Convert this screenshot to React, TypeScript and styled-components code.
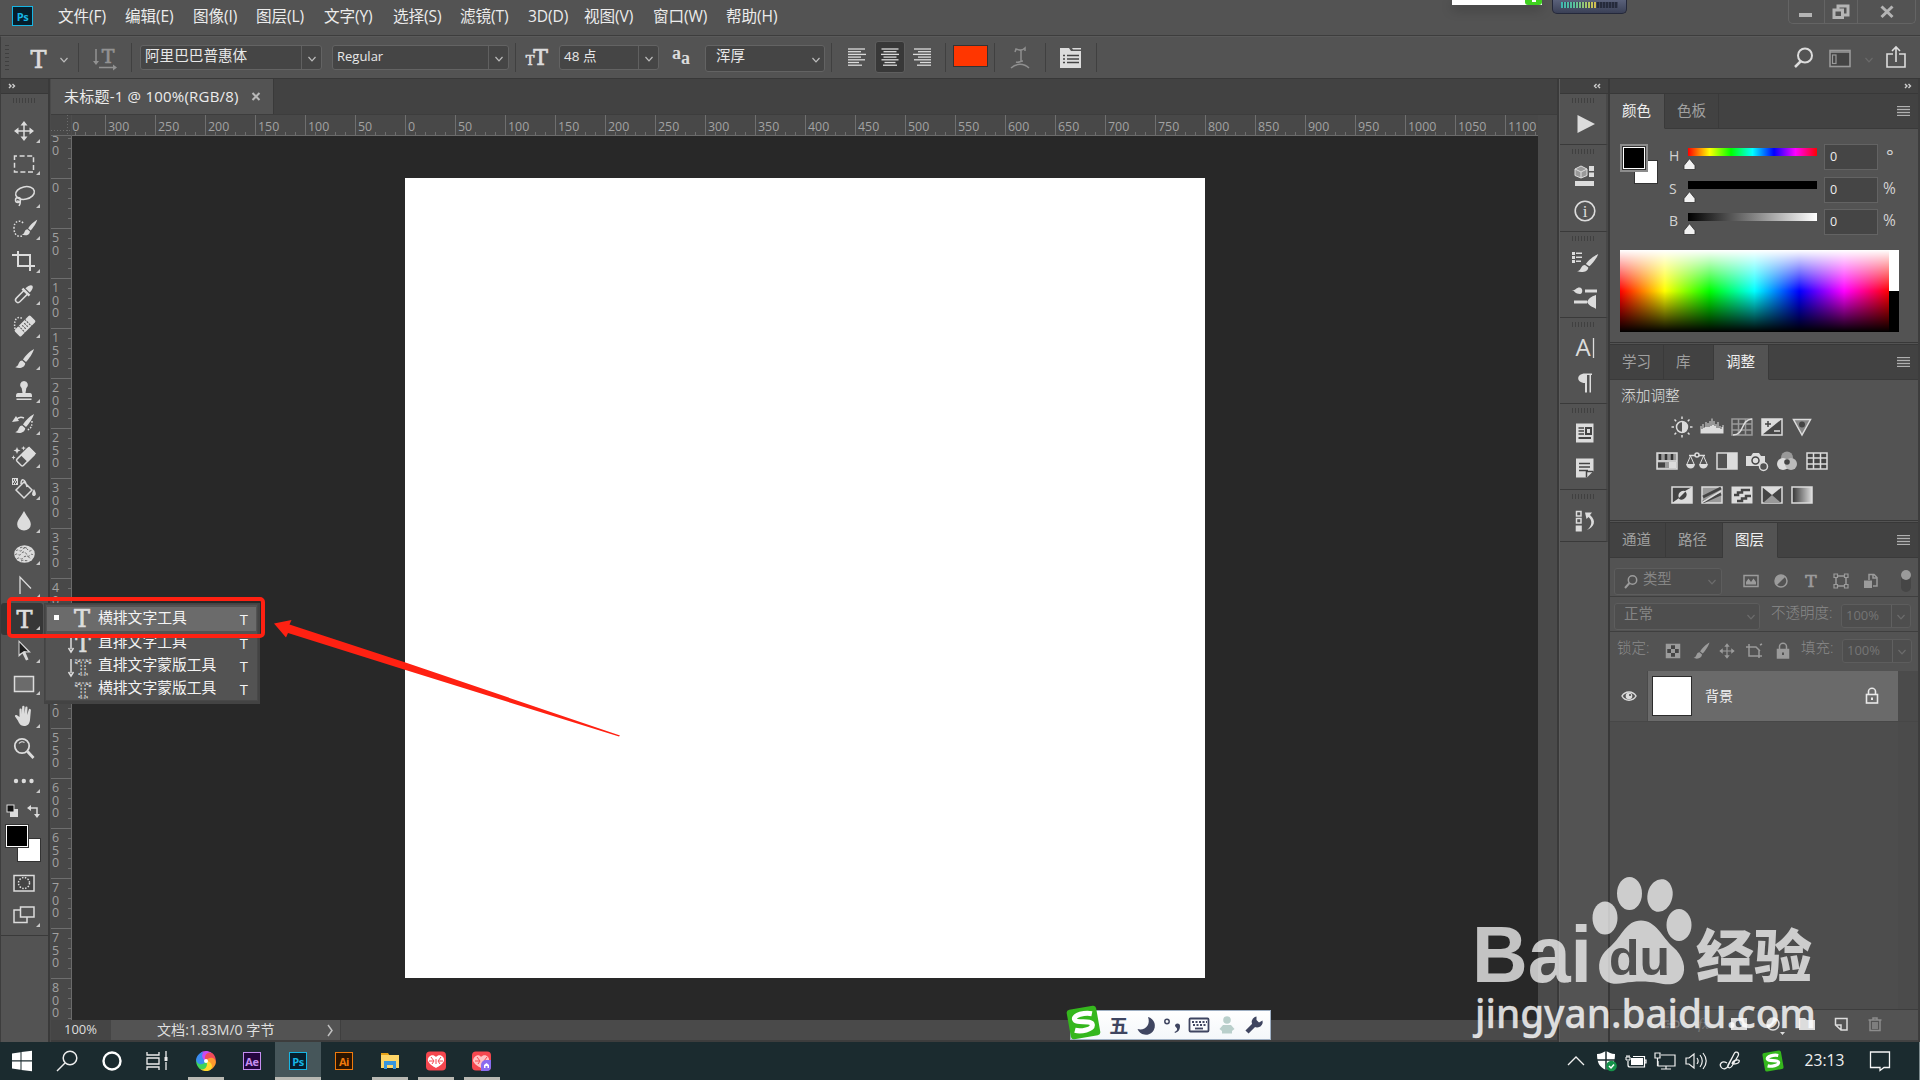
import React from "react";
import styled, { createGlobalStyle, css } from "styled-components";

const UI = `"Open Sans", "Noto Sans CJK SC", sans-serif`;
const LIGHT = "#dcdcdc";

const Global = createGlobalStyle`
  *, *::before, *::after { box-sizing: border-box; }
  body { margin: 0; background: #282828; overflow: hidden; }
  svg { display: block; flex: none; overflow: visible; }
`;

const Screen = styled.div`
  position: relative;
  width: 1920px;
  height: 1080px;
  display: flex;
  flex-direction: column;
  overflow: hidden;
  background: #535353;
  color: #e6e6e6;
  font: 14px/1 ${UI};
  white-space: nowrap;
`;

/* ---------- menu bar ---------- */
const MenuBar = styled.header`
  display: flex;
  height: 36px;
  flex: none;
  border-bottom: 1px solid #3d3d3d;
`;
const AppBadge = styled.div<{ $c: string; $bg: string; $w?: number }>`
  display: flex;
  align-items: center;
  justify-content: center;
  flex: none;
  width: ${(p) => p.$w ?? 18}px;
  height: ${(p) => (p.$w ?? 19) - 1}px;
  border: 1.5px solid ${(p) => p.$c};
  background: ${(p) => p.$bg};
  color: ${(p) => p.$c};
  font: 700 11px/1 "Open Sans", sans-serif;
  letter-spacing: -0.4px;
`;
const BadgeSlot = styled.div`
  padding: 6px 0 0 12px;
  width: 58px;
`;
const MenuItem = styled.span<{ $w: number }>`
  width: ${(p) => p.$w}px;
  padding-top: 9px;
  font-size: 15.6px;
  letter-spacing: -0.1px;
  color: #ececec;
`;
const WindowButtons = styled.div`
  display: flex;
  margin-left: auto;
  margin-right: 4px;
  width: 128px;
  height: 24px;
  border: 1px solid #646464;
  border-top: 0;
  border-radius: 0 0 5px 5px;
`;
const WinBtn = styled.div<{ $w: number }>`
  width: ${(p) => p.$w}px;
  display: flex;
  justify-content: center;
  padding-top: 3px;
  & + & { border-left: 1px solid #646464; }
`;
const PeekCard = styled.div`
  position: absolute;
  left: 1452px;
  top: 0;
  width: 90px;
  height: 5px;
  display: flex;
  justify-content: flex-end;
  background: #fff;
  box-shadow: 0 4px 12px rgba(0, 0, 0, 0.3);
`;
const PeekDot = styled.div`
  width: 17px;
  height: 5px;
  background: #3fd01f;
  border-radius: 0 0 3px 3px;
  display: flex;
  justify-content: center;
  &::after { content: ""; width: 4px; height: 2px; background: #fff; }
`;
const Meter = styled.div`
  position: absolute;
  left: 1552px;
  top: 0;
  width: 75px;
  height: 14px;
  border: 1px solid #24283a;
  border-top: 0;
  border-radius: 0 0 5px 5px;
  background: linear-gradient(#5a617a, #3a4056);
  padding: 2px 8px 0;
`;
const MeterBars = styled.div`
  height: 6px;
  background:
    repeating-linear-gradient(to right, transparent 0 2px, #3b4157 2px 3px),
    linear-gradient(to right, #3fb5b0, #5cc09a 25%, #b9c860 50%, #d8b84a 64%, #262b3c 64%);
`;

/* ---------- options bar ---------- */
const OptionsBar = styled.div`
  display: flex;
  height: 43px;
  flex: none;
  align-items: flex-start;
  border-left: 1px solid #3d3d3d;
  border-top: 1px solid #5a5a5a;
  border-bottom: 1px solid #383838;
`;
const Slot = styled.div<{ $w: number; $t?: number }>`
  width: ${(p) => p.$w}px;
  flex: none;
  padding-top: ${(p) => p.$t ?? 0}px;
  display: flex;
  justify-content: center;
`;
const Grip = styled.div`
  width: 4px;
  height: 25px;
  flex: none;
  margin: 8px 0 0 4px;
  background: repeating-linear-gradient(#3f3f3f 0 1.5px, transparent 1.5px 4px);
`;
const Sep = styled.div`
  width: 1px;
  height: 29px;
  margin-top: 6px;
  background: #404040;
  flex: none;
`;
const Combo = styled.div<{ $w: number; $h?: number; $l?: number; $r?: number; $dim?: boolean; $pl?: number; $fs?: number }>`
  display: flex;
  align-items: stretch;
  flex: none;
  width: ${(p) => p.$w}px;
  height: ${(p) => p.$h ?? 25}px;
  margin: ${(p) => (p.$dim ? 0 : 8)}px ${(p) => p.$r ?? 0}px 0 ${(p) => p.$l ?? 0}px;
  border: 1px solid ${(p) => (p.$dim ? "#5d5d5d" : "#636363")};
  border-radius: 3px;
  background: ${(p) => (p.$dim ? "#4e4e4e" : "#454545")};
  color: ${(p) => (p.$dim ? "#858585" : "#e8e8e8")};
  font-size: ${(p) => p.$fs ?? 13}px;
  padding-left: ${(p) => p.$pl ?? 4}px;
`;
const ComboText = styled.span<{ $dy?: number; $faint?: boolean }>`
  flex: 1;
  display: flex;
  align-items: center;
  gap: 5px;
  padding-bottom: ${(p) => p.$dy ?? 0}px;
  ${(p) => p.$faint && css`color: #757575;`}
`;
const ComboArrow = styled.span<{ $line?: boolean; $w?: number }>`
  width: ${(p) => p.$w ?? 20}px;
  display: flex;
  align-items: center;
  justify-content: center;
  padding-top: 2px;
  ${(p) => p.$line && css`border-left: 1px solid #606060;`}
`;
const AlignBox = styled.div<{ $on?: boolean }>`
  width: 30px;
  height: 32px;
  flex: none;
  margin-top: 4px;
  display: flex;
  align-items: center;
  justify-content: center;
  border-radius: 3px;
  ${(p) => p.$on && css`background: #383838; border: 1px solid #5e5e5e;`}
`;
const TextColor = styled.div`
  width: 35px;
  height: 22px;
  flex: none;
  margin: 8px 6px 0 7px;
  background: #ff3600;
  border: 1px solid #333;
`;

/* ---------- work area ---------- */
const Work = styled.main`
  display: flex;
  height: 963px;
  flex: none;
`;
const ToolColumn = styled.aside`
  width: 50px;
  flex: none;
  display: flex;
  flex-direction: column;
  border-left: 1px solid #3d3d3d;
  border-right: 2px solid #3a3a3a;
  background: #535353;
`;
const CollapseBar = styled.div<{ $end?: boolean; $pad?: number }>`
  height: 15px;
  flex: none;
  display: flex;
  align-items: center;
  justify-content: ${(p) => (p.$end ? "flex-end" : "flex-start")};
  padding: 0 ${(p) => p.$pad ?? 7}px;
  background: #424242;
  border-bottom: 1px solid #383838;
`;
const HGrip = styled.div<{ $l: number }>`
  width: 24px;
  height: 5px;
  margin: 4px 0 0 ${(p) => p.$l}px;
  flex: none;
  background: repeating-linear-gradient(to right, #404040 0 1px, transparent 1px 3px);
`;
const ToolList = styled.div`
  margin-top: 12px;
  display: flex;
  flex-direction: column;
`;
const Tool = styled.div<{ $on?: boolean }>`
  position: relative;
  height: 32.5px;
  width: 42px;
  padding-left: 11px;
  display: flex;
  align-items: center;
  ${(p) => p.$on && css`background: #373737; border-radius: 3px;`}
`;
const Corner = styled.i`
  position: absolute;
  right: 3px;
  bottom: 5px;
  border-left: 4px solid transparent;
  border-bottom: 4px solid #c8c8c8;
`;
const MiniRow = styled.div`
  display: flex;
  justify-content: space-between;
  width: 35px;
  margin: 6px 0 0 5px;
  height: 15px;
`;
const SwatchPair = styled.div`
  position: relative;
  width: 36px;
  height: 38px;
`;
const BgSwatch = styled.div`
  position: absolute;
  right: 0;
  bottom: 0;
  width: 24px;
  height: 24px;
  background: #fff;
  border: 1px solid #333;
`;
const FgSwatch = styled.div`
  position: absolute;
  left: 0;
  top: 0;
  width: 24px;
  height: 24px;
  background: #000;
  border: 1px solid #333;
  box-shadow: inset 0 0 0 1px #fff;
`;
const ToolSwatches = styled.div`
  margin: 5px 0 0 4px;
`;
const ToolFoot = styled.div`
  display: flex;
  flex-direction: column;
  padding-top: 5px;
  height: 74px;
  border-bottom: 1px solid #3a3a3a;
`;

const Doc = styled.section`
  width: 1509px;
  flex: none;
  display: flex;
  flex-direction: column;
  border-right: 2px solid #3a3a3a;
  padding-left: 1px;
  background: #4a4a4a;
`;
const TabStrip = styled.div`
  height: 36px;
  flex: none;
  background: #424242;
  border-bottom: 1px solid #3d3d3d;
`;
const DocTab = styled.div`
  width: 223px;
  height: 35px;
  display: flex;
  align-items: center;
  padding-left: 13px;
  gap: 10px;
  background: #535353;
  border-right: 1px solid #3a3a3a;
  font-size: 15px;
  color: #ececec;
`;
const DocTitle = styled.span`
  width: 177px;
  letter-spacing: 0.22px;
`;
const RulerRow = styled.div`
  height: 21px;
  display: flex;
  width: 1487px;
`;
const RulerCorner = styled.div`
  width: 21px;
  flex: none;
  border-right: 1px solid #4e4e4e;
  border-bottom: 1px solid #6a6a6a;
  background:
    repeating-linear-gradient(to right, #6c6c6c 0 1px, transparent 1px 3px) 0 15px / 100% 1px no-repeat,
    repeating-linear-gradient(#6c6c6c 0 1px, transparent 1px 3px) 16px 0 / 1px 100% no-repeat,
    #484848;
`;
const HRuler = styled.div`
  flex: 1;
  display: flex;
  overflow: hidden;
  background: #484848;
  border-bottom: 1px solid #6a6a6a;
`;
const HCell = styled.div`
  width: 50px;
  flex: none;
  border-left: 1px solid #6e6e6e;
  padding: 6px 0 0 2px;
  font-size: 12.4px;
  color: #a2a2a2;
  background: repeating-linear-gradient(to right, transparent 0 9px, #6e6e6e 9px 10px) 0 100% / 49px 3px no-repeat;
  &:first-child { margin-left: -17px; }
`;
const CanvasRow = styled.div`
  display: flex;
  height: 884px;
`;
const VRuler = styled.div`
  width: 21px;
  flex: none;
  overflow: hidden;
  background: #484848;
  border-right: 1px solid #6a6a6a;
`;
const VCell = styled.div`
  height: 50px;
  border-top: 1px solid #6e6e6e;
  padding: 3px 0 0 1px;
  display: flex;
  flex-direction: column;
  font-size: 12.4px;
  line-height: 12.5px;
  color: #a2a2a2;
  background: repeating-linear-gradient(transparent 0 9px, #6e6e6e 9px 10px) 100% 0 / 3px 49px no-repeat;
  &:first-child { margin-top: -8px; }
`;
const Pasteboard = styled.div`
  width: 1466px;
  background: #282828;
  padding: 42px 0 0 333px;
`;
const Artboard = styled.div`
  width: 800px;
  height: 800px;
  background: #fff;
`;
const StatusBar = styled.div`
  height: 22px;
  display: flex;
  align-items: center;
  border-bottom: 2px solid #3d3d3d;
  color: #dedede;
`;
const Zoom = styled.span`
  width: 60px;
  height: 100%;
  padding: 3px 0 0 13px;
  background: #454545;
  font-size: 13px;
`;
const DocInfo = styled.span`
  width: 230px;
  height: 100%;
  display: flex;
  justify-content: space-between;
  align-items: center;
  padding: 0 5px 0 46px;
  background: #535353;
  border-right: 1px solid #3f3f3f;
  font-size: 14.1px;
`;

/* ---------- collapsed dock ---------- */
const Dock = styled.aside`
  width: 49px;
  flex: none;
  border-left: 1px solid #5c5c5c;
  background: #535353;
  display: flex;
  flex-direction: column;
`;
const DockGroup = styled.div<{ $h: number }>`
  height: ${(p) => p.$h}px;
  border-bottom: 1px solid #3a3a3a;
  border-right: 2px solid #484848;
  display: flex;
  flex-direction: column;
`;
const DockItem = styled.div<{ $mt?: number }>`
  height: 35.5px;
  margin-top: ${(p) => p.$mt ?? 0}px;
  padding-left: 13px;
  display: flex;
  align-items: center;
`;

/* ---------- panels ---------- */
const Panels = styled.aside`
  width: 312px;
  flex: none;
  display: flex;
  flex-direction: column;
  border-left: 2px solid #383838;
  border-right: 2px solid #3d3d3d;
`;
const Panel = styled.section<{ $h: number }>`
  height: ${(p) => p.$h}px;
  flex: none;
  display: flex;
  flex-direction: column;
  border-bottom: 3px double #383838;
`;
const Tabs = styled.div`
  height: 35px;
  flex: none;
  display: flex;
  background: #424242;
`;
const Tab = styled.div<{ $w: number; $on?: boolean }>`
  width: ${(p) => p.$w}px;
  padding: 10px 0 0 12px;
  font-size: 14.5px;
  color: ${(p) => (p.$on ? "#f0f0f0" : "#a0a0a0")};
  background: ${(p) => (p.$on ? "#535353" : "#424242")};
  border-right: 1px solid #3a3a3a;
  border-bottom: 1px solid ${(p) => (p.$on ? "#535353" : "#3a3a3a")};
`;
const TabRest = styled.div`
  flex: 1;
  display: flex;
  justify-content: flex-end;
  padding: 12px 8px 0 0;
  border-bottom: 1px solid #3a3a3a;
`;
const Burger = styled.div`
  width: 13px;
  height: 10px;
  background: repeating-linear-gradient(#b0b0b0 0 1px, #555 1px 3px);
`;
const ColorTop = styled.div`
  display: flex;
  height: 121px;
  padding: 15px 0 0 10px;
`;
const SwatchBox = styled.div`
  width: 49px;
  & > div { margin: 2px 0 0 2px; }
`;
const FgRing = styled(FgSwatch)`
  outline: 2px solid #8c8c8c;
`;
const Sliders = styled.div`
  display: flex;
  flex-direction: column;
`;
const SliderRow = styled.div`
  display: flex;
  height: 32.5px;
  font-size: 14px;
  color: #d2d2d2;
`;
const SliderLabel = styled.span`
  width: 19px;
  padding-top: 5px;
`;
const Track = styled.div<{ $bg: string }>`
  width: 129px;
  height: 8px;
  margin-top: 4px;
  background: ${(p) => p.$bg};
  svg { margin: 10px 0 0 -5px; }
`;
const NumBox = styled.div`
  width: 54px;
  height: 26px;
  margin: 0 5px 0 7px;
  padding: 6px 0 0 5px;
  background: #454545;
  border: 1px solid #636363;
  font-size: 12.5px;
  color: #eee;
`;
const Unit = styled.span<{ $big?: boolean }>`
  padding: ${(p) => (p.$big ? "3px 0 0 3px" : "4px 0 0")};
  font-size: ${(p) => (p.$big ? 18 : 15.5)}px;
`;
const SpectrumRow = styled.div`
  display: flex;
  margin-left: 10px;
`;
const Spectrum = styled.div`
  width: 269px;
  height: 82px;
  background:
    linear-gradient(#fff, rgba(255, 255, 255, 0) 50%, rgba(0, 0, 0, 0) 50%, #000),
    linear-gradient(to right, #f00, #ff0 16.67%, #0f0 33.33%, #0ff 50%, #00f 66.67%, #f0f 83.33%, #f00);
`;
const Mono = styled.div`
  width: 10px;
  background: linear-gradient(#fff 50%, #000 50%);
`;
const AdjTitle = styled.div`
  padding: 8px 0 0 11px;
  height: 30px;
  font-size: 14.7px;
  font-weight: 300;
  color: #e2e2e2;
`;
const AdjRow = styled.div<{ $l: number }>`
  height: 34px;
  padding-left: ${(p) => p.$l}px;
  display: flex;
  align-items: center;
  gap: 6px;
`;
const LayerTools = styled.div<{ $h: number; $line?: boolean; $pt?: number; $pb?: number }>`
  height: ${(p) => p.$h}px;
  flex: none;
  display: flex;
  align-items: center;
  padding: ${(p) => p.$pt ?? 0}px 0 ${(p) => p.$pb ?? 0}px 4px;
  color: #8a8a8a;
  font-size: 14.5px;
  ${(p) => p.$line && css`border-bottom: 1px solid #3f3f3f;`}
`;
const Gap = styled.span<{ $w: number }>`
  width: ${(p) => p.$w}px;
  flex: none;
`;
const FilterIcons = styled.div`
  display: flex;
  margin-left: 17px;
  gap: 6px;
`;
const Toggle = styled.div`
  width: 10px;
  height: 22px;
  margin-left: 18px;
  border-radius: 5px;
  background: #464646;
  &::before { content: ""; display: block; width: 10px; height: 10px; border-radius: 50%; background: #9a9a9a; }
`;
const FieldLabel = styled.span<{ $w: number; $l: number }>`
  width: ${(p) => p.$w}px;
  margin-left: ${(p) => p.$l}px;
  font-weight: 300;
  padding-bottom: 6px;
`;
const LayerRow = styled.div`
  height: 51px;
  flex: none;
  display: flex;
  border-bottom: 1px solid #474747;
  background: #535353;
`;
const EyeCell = styled.div`
  width: 38px;
  display: flex;
  align-items: center;
  justify-content: center;
  border-right: 1px solid #4a4a4a;
`;
const LayerBody = styled.div`
  width: 250px;
  display: flex;
  align-items: center;
  padding: 0 19px 0 4px;
  background: #6a6a6a;
  color: #f2f2f2;
`;
const Thumb = styled.div`
  width: 40px;
  height: 40px;
  background: #fff;
  border: 1px solid #2c2c2c;
`;
const LayerName = styled.span`
  flex: 1;
  margin-left: 13px;
  font-size: 14px;
`;
const ScrollCell = styled.div`
  flex: 1;
  background: #4b4b4b;
`;
const LayerEmpty = styled.div`
  flex: 1;
  background: #4d4d4d;
  border-right: 20px solid #4b4b4b;
`;
const LayerFoot = styled.div`
  height: 33px;
  flex: none;
  display: flex;
  align-items: center;
  justify-content: flex-end;
  padding: 0 31px 2px 0;
  gap: 10px;
  background: #535353;
  border-top: 1px solid #3d3d3d;
  border-bottom: 2px solid #424242;
`;

/* ---------- task bar ---------- */
const TaskBar = styled.footer`
  height: 38px;
  flex: none;
  display: flex;
  background: #1b2b2f;
`;
const TaskCell = styled.div<{ $w: number; $on?: boolean; $open?: boolean }>`
  position: relative;
  width: ${(p) => p.$w}px;
  display: flex;
  align-items: center;
  justify-content: center;
  background: ${(p) => (p.$on ? "#46565a" : "transparent")};
  ${(p) => (p.$on || p.$open) && css`
    &::after {
      content: "";
      position: absolute;
      bottom: 0;
      left: ${p.$on ? 0 : 5}px;
      right: ${p.$on ? 0 : 5}px;
      height: 3px;
      background: #b9b9b3;
    }
  `}
`;
const Tray = styled.div`
  margin-left: auto;
  display: flex;
  align-items: center;
  width: 355px;
`;
const TrayCell = styled.div<{ $w: number }>`
  width: ${(p) => p.$w}px;
  display: flex;
  justify-content: center;
`;
const Clock = styled.span`
  width: 64px;
  padding-left: 13px;
  font-size: 15.6px;
  color: #f0f0f0;
`;
const ShowDesktop = styled.div`
  width: 1px;
  height: 38px;
  margin-left: 15px;
  background: #7c8a8d;
`;

/* ---------- overlays ---------- */
const Flyout = styled.div`
  position: absolute;
  left: 44px;
  top: 603px;
  width: 216px;
  height: 101px;
  padding: 3px 2px;
  border: 1px solid #434343;
  border-right-width: 2px;
  border-bottom-width: 3px;
  background: #535353;
  box-shadow: inset 0 0 0 1px #484848;
`;
const FlyRow = styled.div<{ $on?: boolean; $h: number }>`
  height: ${(p) => p.$h}px;
  display: flex;
  align-items: center;
  padding: 0 8px 0 7px;
  background: ${(p) => (p.$on ? "#6b6b6b" : "transparent")};
  color: #f4f4f4;
  font-size: 14.8px;
`;
const Bullet = styled.span<{ $on?: boolean }>`
  width: 5px;
  height: 5px;
  margin-right: 10px;
  margin-bottom: 3px;
  background: ${(p) => (p.$on ? "#fff" : "transparent")};
`;
const FlyText = styled.span`
  flex: 1;
  margin-left: 5px;
  padding-bottom: 4px;
`;
const RedFrame = styled.div`
  position: absolute;
  left: 7px;
  top: 597px;
  width: 258px;
  height: 41px;
  border: 4px solid #ff2112;
  border-radius: 5px;
`;
const Over = styled.svg<{ $x: number; $y: number }>`
  position: absolute;
  left: ${(p) => p.$x}px;
  top: ${(p) => p.$y}px;
`;
const Ime = styled.div`
  position: absolute;
  left: 1066px;
  top: 1006px;
  display: flex;
  height: 34px;
  align-items: flex-end;
`;
const ImeBar = styled.div`
  width: 201px;
  height: 30px;
  margin-left: -31px;
  padding-left: 37px;
  display: flex;
  align-items: center;
  background: linear-gradient(#fff, #f4f7fa);
  border: 1px solid #9fb0c4;
  color: #3f4560;
`;
const ImeCell = styled.span<{ $w: number }>`
  width: ${(p) => p.$w}px;
  display: flex;
  justify-content: center;
  padding-bottom: 1px;
  font: 700 19px/1 "Noto Sans CJK SC", sans-serif;
`;
const ImeLogo = styled.div`
  position: relative;
  z-index: 1;
`;

/* ---------- icons (origin at the centre of a square box) ---------- */
type IcProps = { s?: number; c?: string; w?: number; children: React.ReactNode };
const Ic = ({ s = 24, c = LIGHT, w = 1.5, children }: IcProps) => (
  <svg width={s} height={s} viewBox={`${-s / 2} ${-s / 2} ${s} ${s}`} fill="none" stroke={c} strokeWidth={w} color={c}>
    {children}
  </svg>
);
const F = { fill: "currentColor", stroke: "none" };
const TType = ({ x = 0, y = 8.5, size = 24, dashed = false }: { x?: number; y?: number; size?: number; dashed?: boolean }) => (
  <text x={x} y={y} fontSize={size} textAnchor="middle" fontFamily='"DejaVu Serif", serif' fontWeight={dashed ? 700 : 400}
    fill={dashed ? "none" : "currentColor"} stroke="currentColor"
    strokeWidth={dashed ? 1.1 : 0.7} strokeDasharray={dashed ? "2 1.4" : undefined}>T</text>
);
const Chevron = ({ c = "#bdbdbd" }: { c?: string }) => (
  <Ic s={10} c={c} w={1.2}><path d="M-3.500-2L0 1.800 3.500-2" /></Ic>
);
const DoubleChevron = ({ left }: { left?: boolean }) => (
  <Ic s={8} c="#cfcfcf" w={1.4}>
    {left ? <path d="M-.5-2L-2.500 0-.5 2M3-2L1 0 3 2" /> : <path d="M-3-2L-1 0-3 2M.5-2L2.500 0 .5 2" />}
  </Ic>
);
const Brush = () => (
  <path {...F} d="M10-10C6-8 1-3-1 0.500L2 3C5 0 9-6 10-10ZM-1.800 1.500C-5 1.500-5 5-6.500 6.800-7.300 7.800-8.500 8-9 8-5 10 1 9 1.200 4.200Z" />
);
const Scale = ({ k, children }: { k: number; children: React.ReactNode }) => <g transform={`scale(${k})`}>{children}</g>;
const MoveIcon = () => (
  <g><path d="M0-7V7M-7 0H7" /><path {...F} d="M0-10L3.500-5.500H-3.500ZM0 10L3.500 5.500H-3.500ZM-10 0L-5.500-3.500V3.500ZM10 0L5.500-3.500V3.500Z" /></g>
);
const LockIcon = ({ open }: { open?: boolean }) => (
  <g>
    <path d="M-3.500-1V-4.500A3.500 3.200 0 013.500-4.500V-1" />
    <rect x="-5.500" y="-1.500" width="11" height="8.500" fill={open ? "none" : "currentColor"} />
    <rect x="-1" y="1.500" width="2" height="2.500" fill={open ? "currentColor" : "#535353"} stroke="none" />
  </g>
);

const tools: React.ReactNode[] = [
  <MoveIcon />,
  <rect x="-9.500" y="-8" width="19" height="16" strokeDasharray="5 2.600" strokeDashoffset="2.500" />,
  <g><ellipse cx="1" cy="-3" rx="9.500" ry="6.200" transform="rotate(-12 1 -3)" /><circle cx="-6" cy="4" r="2.500" /><path d="M-7 5C-2 5-4 8-5 10" /></g>,
  <g><path strokeDasharray="1.600 1.600" d="M-1-6C-3-9-10-9-10-1S-5 8-2 7" /><g transform="translate(5 -1) scale(.82)"><Brush /></g></g>,
  <path strokeWidth="2" d="M-12-6H6V10M-6-10V5H11" />,
  <g transform="rotate(45)"><path d="M-2.500-2V8C-2.500 12 2.500 12 2.500 8V-2" /><path {...F} d="M-5-4H5V-1.500H-5ZM-3-5C-3-14 3-14 3-5Z" /></g>,
  <g><path strokeDasharray="1.500 1.500" d="M-9 3C-11-9-5-10-1-7" /><g transform="translate(1 0) rotate(-45)"><rect {...F} x="-11" y="-4.500" width="22" height="9" rx="1.500" /><path stroke="#535353" strokeWidth="1" d="M-4.500-5V5M4.500-5V5M-1.500-2.500V2.500M1.500-2.500V2.500" strokeDasharray="2 1" /></g></g>,
  <Brush />,
  <path {...F} d="M0-10A4 4 0 00-2.300-2.800L-1.500 2H-6Q-8 2-8 5V6H8V5Q8 2 6 2H1.500L2.300-2.800A4 4 0 000-10ZM-7.500 7.500H7.500V9H-7.500Z" />,
  <g><Brush /><path {...F} d="M-12-2L-8-8-5-3Z" /><path strokeWidth="1.400" d="M-8-4C-5-8-2-7 0-6" /><path strokeDasharray="1.500 1.500" d="M8-3C8 2 7 5 3 6" /></g>,
  <g><g transform="translate(1.500 1) rotate(-45)"><rect x="-9" y="-4.500" width="18" height="9" rx="1.500" /><rect {...F} x="-2" y="-5" width="12" height="10" /></g><path {...F} d="M-7-9L-6-6.500-3.500-5.500-6-4.500-7-2-8-4.500-10.500-5.500-8-6.500ZM-.5-10L.2-8.500 2-8 .2-7.200-.5-5.500-1.200-7.200-3-8-1.200-8.500ZM-10.500-1L-10 .8-8.500 1.500-10 2.200-10.500 4-11 2.200-12.500 1.500-11 .8Z" /></g>,
  <g><path d="M-8 1L0-7 8 1 0 9ZM-3-5C-3-11 1-11 3-2" /><path {...F} d="M10 0C13 5 12 7 10 7S7 5 10 0ZM-12-11H-6V-4H-12Z" /><path stroke="#444" strokeDasharray="1 1" d="M-11-9H-7M-10-7H-7M-11-5.500H-7" /></g>,
  <path {...F} d="M0-10C3-4 6.800-1 6.800 3.500A6.800 6 0 01-6.800 3.500C-6.800-1-3-4 0-10Z" />,
  <g><ellipse {...F} cx=".5" cy="0" rx="10.300" ry="8.800" /><path stroke="#666" strokeWidth="1" strokeDasharray="2.500 1.500" d="M-8-3C-6-6-4-1-2-4S2-7 4-4 7-5 8-3M-9 1C-7-2-5 3-3 0S1-3 3 1 7-2 9 1M-7 5C-5 2-3 7-1 4S4 2 7 5M-4-6C-2-8 1-5 3-7M-3 7C0 5 2 8 4 6" /></g>,
  <path strokeWidth="1.300" d="M-4 8V-9L7 2.500" />,
  <TType x={0.5} />,
  <g><path {...F} fill="#d8d8d8" d="M-5.500-11V6L-1.500 2.500 2 9.500 4.500 8.500 1.500 1.500H7Z" /><path fill="#1e1e1e" stroke="none" d="M-4.500-8.500L4 .5 0 0-4.500 3Z" /></g>,
  <rect x="-9.500" y="-7.500" width="19" height="15" fill="#6b6b6b" />,
  <path {...F} d="M-4.500 1V-6.500A1.100 1.100 0 01-2.300-6.500V-2L-1.800-9A1.100 1.100 0 01.5-9V-2L1.300-8.500A1.100 1.100 0 013.500-8.300L3.200-1 4.800-6.500A1.100 1.100 0 016.900-6L6 4C5.500 8.500 3 10 0 10-3.500 10-5 7-6.500 4L-9 .5C-9.500-1-8-1.500-7-.8Z" />,
  <g><circle cx="-2" cy="-3" r="7.200" strokeWidth="1.800" /><path d="M-5-5.500A4 4 0 01.5-6.500" strokeWidth="1.100" /><path d="M3.500 2.500L9.500 9" strokeWidth="2.800" /></g>,
  <g {...F}><circle cx="-8" cy="0" r="2.200" /><circle cx="-.2" cy="0" r="2.200" /><circle cx="7.500" cy="0" r="2.200" /></g>,
];

const horizontal = [350, 300, 250, 200, 150, 100, 50, ...Array.from({ length: 23 }, (_, i) => i * 50)];
const vertical = [50, ...Array.from({ length: 17 }, (_, i) => i * 50)];

const menus: [string, number][] = [
  ["文件(F)", 67], ["编辑(E)", 68], ["图像(I)", 63], ["图层(L)", 68], ["文字(Y)", 69], ["选择(S)", 67],
  ["滤镜(T)", 68], ["3D(D)", 56], ["视图(V)", 69], ["窗口(W)", 73], ["帮助(H)", 60],
];

const AlignIcon = ({ kind }: { kind: "l" | "c" | "r" }) => (
  <Ic s={18} c={LIGHT} w={1.3}>
    {[17, 13, 18, 13, 17, 11, 14].map((len, i) => {
      const x = kind === "l" ? -9 : kind === "r" ? 9 - len : -len / 2;
      return <path key={i} d={`M${x} ${-8 + i * 2.7}h${len}`} />;
    })}
  </Ic>
);

const SliderKnob = () => (
  <svg width="13" height="13" viewBox="0 0 13 13"><path d="M6.500.7L12 7.500V11.500H1V7.500Z" fill="#f2f2f2" stroke="#333" strokeWidth=".8" /></svg>
);

const PanelHead = ({ tabs }: { tabs: [string, number, boolean?][] }) => (
  <Tabs>
    {tabs.map(([t, w, on]) => <Tab key={t} $w={w} $on={on}>{t}</Tab>)}
    <TabRest><Burger /></TabRest>
  </Tabs>
);

const adj1 = [
  <g><circle r="5.500" /><path {...F} d="M0-5.500A5.500 5.500 0 010 5.500Z" /><path d="M0-10.500V-8M0 8V10.500M-10.500 0H-8M8 0H10.500M-7.500-7.500L-5.800-5.800M5.800 5.800L7.500 7.500M7.500-7.500L5.800-5.800M-5.800 5.800L-7.500 7.500" /></g>,
  <path {...F} d="M-11.500 6.500V-1H-10.500V2H-9.500V-3H-8.500V1H-7.500V0H-6.500V-5H-5.500V0H-4.500V-4H-3.500V0H-2.500V-6H-1.500V-1H-.5V-8.500H.5V-2H1.500V-6H2.500V-1H3.500V-3H4.500V1H5.500V-5H6.500V1H7.500V-1H8.500V2H9.500V0H10.500V-2H11.500V6.500Z" />,
  <g><rect x="-10" y="-8" width="20" height="16" stroke="#9a9a9a" /><path stroke="#9a9a9a" d="M-3.500-8V8M3.500-8V8M-10-3H10M-10 3H10" /><path d="M-9 8C3 8-2-7 10-8" /></g>,
  <g><rect x="-10" y="-8" width="20" height="16" fill="#484848" /><path {...F} d="M-10 8V-8H10Z" /><path stroke="#444" d="M-7-3H-1M-4-6V0" /><path d="M2 4H8" /></g>,
  <g><path fill="#858585" d="M-8.500-7.500H8.500L0 8Z" /><circle cx="0" cy="-2.500" r="3" fill="#444" stroke="none" /></g>,
];
const adj2 = [
  <g><rect x="-10" y="-8" width="20" height="16" fill="#999" /><path stroke="#333" strokeWidth="2.500" d="M-7-7V-1M-1-7V-1M5-7V-1" /><path stroke="#444" strokeWidth="5" d="M-9 4H-2" /><path {...F} d="M2 1H9V7H2Z" /><path d="M-10 0H10" /></g>,
  <g><path d="M-8-5.500H8" /><circle cx="0" cy="-6" r="2" fill="#535353" /><path strokeWidth="1" d="M-6.500-5L-10 3M-6.500-5L-3 3M6.500-5L3 3M6.500-5L10 3" /><path {...F} d="M-11 3H-2C-2.500 9-10 9-11 3ZM2 3H11C10 9 2.500 9 2 3Z" /></g>,
  <g><rect x="-10" y="-8" width="20" height="16" /><path {...F} d="M0-8H10V8H0Z" /></g>,
  <g><path {...F} d="M-11-5H-6L-4-8H2L4-5H8V5H-11Z" /><circle cx="-1.500" cy="-.5" r="3.500" stroke="#444" /><circle cx="6.500" cy="5.500" r="4" fill="#535353" /></g>,
  <g stroke="none"><circle cx="0" cy="-3.500" r="6" fill="#999" /><circle cx="-4" cy="3" r="6" fill="#dcdcdc" /><circle cx="4" cy="3" r="6" fill="#bbb" /><circle cx="0" cy="1" r="2.800" fill="#444" /></g>,
  <g><rect x="-10" y="-8" width="20" height="16" fill="#444" /><path d="M-3.500-8V8M3.500-8V8M-10-3H10M-10 3H10" /></g>,
];
const adj3 = [
  <g><rect x="-10" y="-8" width="20" height="16" fill="#444" /><path {...F} d="M-10 8L-3 3A5 5 0 013-4L10-8V8Z" /><path fill="#444" stroke="none" d="M-3.500 3.500A5 5 0 003.500-3.500Z" /></g>,
  <g><rect x="-10" y="-8" width="20" height="16" fill="#999" /><path stroke="#444" strokeWidth="3" d="M-9 2L9-7M-9 7L9-1" /><path d="M-9 7L9-4" /></g>,
  <g><rect {...F} x="-10.500" y="-8.500" width="21" height="17" /><path stroke="#444" strokeWidth="2.500" d="M-8 0H-4V-2.500H0V-5H8M-5 6H0V3.500H4V1H9" /></g>,
  <g><rect x="-10" y="-8" width="20" height="16" fill="#444" /><path {...F} d="M-10-8H10L0 0Z" /><path fill="#999" stroke="none" d="M-9 8L0 0 9 8Z" /></g>,
  <g><defs><linearGradient id="gm"><stop stopColor="#333" /><stop offset="1" stopColor="#ddd" /></linearGradient></defs><rect x="-10" y="-8" width="20" height="16" fill="url(#gm)" /></g>,
];

const DIM = "#9b9b9b";

const SLogo = ({ size }: { size: number }) => (
  <svg width={size} height={size} viewBox="0 0 34 34">
    <g transform="rotate(-10 17 17)">
      <rect x="2.500" y="2.500" width="29" height="29" rx="3" fill="#35b71d" />
      <path d="M26.500 10C20 7.500 8.500 8 9 12.500 9.500 17 25 15.500 25 20.500 25 25.500 13 25.500 7.500 23" fill="none" stroke="#fff" strokeWidth="5" />
    </g>
  </svg>
);

export default function App() {
  return (
    <Screen>
      <Global />
      <MenuBar>
        <BadgeSlot><AppBadge $c="#16b5e4" $bg="#061e2c" $w={21}>Ps</AppBadge></BadgeSlot>
        {menus.map(([t, w]) => <MenuItem key={t} $w={w}>{t}</MenuItem>)}
        <WindowButtons>
          <WinBtn $w={35}><Ic s={18} c="#b4b4b4"><path {...F} d="M-7 1H6V5H-7Z" /></Ic></WinBtn>
          <WinBtn $w={34}><Ic s={18} c="#b4b4b4" w={3}><path d="M-3-1V-6H7V3H3" /><rect x="-7" y="-2" width="8.500" height="7.500" /></Ic></WinBtn>
          <WinBtn $w={58}><Ic s={18} c="#b4b4b4" w={3}><path d="M-5.500-5.500L5.500 5M5.500-5.500L-5.500 5" /></Ic></WinBtn>
        </WindowButtons>
      </MenuBar>
      <PeekCard><PeekDot /></PeekCard>
      <Meter><MeterBars /></Meter>

      <OptionsBar>
        <Grip />
        <Slot $w={56} $t={10}><Ic><TType x={1.5} y={8.500} /></Ic></Slot>
        <Slot $w={0} $t={17}><Gap $w={0} /></Slot>
        <Slot $w={13}><Slot $w={0} $t={18}><Chevron /></Slot><Gap $w={16} /></Slot>
        <Sep />
        <Slot $w={52} $t={9}><Ic c="#929292"><TType x={3} y={5} size={19} /><path d="M-9-9V5M-6 9.500H9" /><path {...F} d="M-12 3H-6L-9 7ZM8 6.500V12.500L12 9.500Z" /></Ic></Slot>
        <Sep />
        <Combo $w={182} $l={8} $r={10} $fs={14.600}><ComboText $dy={4}>阿里巴巴普惠体</ComboText><ComboArrow $line><Chevron /></ComboArrow></Combo>
        <Combo $w={177} $r={6} $fs={13}><ComboText $dy={2}>Regular</ComboText><ComboArrow $line><Chevron /></ComboArrow></Combo>
        <Sep />
        <Slot $w={41} $t={8}><Ic><TType x={3.5} y={8} size={22} /><TType x={-7} y={8} size={13} /></Ic></Slot>
        <Combo $w={100} $l={2} $fs={13.500}><ComboText $dy={2}>48 点</ComboText><ComboArrow $line><Chevron /></ComboArrow></Combo>
        <Slot $w={43} $t={8}><Ic><text {...F} x="-9" y="2" fontSize="18" fontWeight="700" fontFamily='"Liberation Serif", serif'>a</text><text {...F} x="0" y="7" fontSize="18" fontWeight="700" fontFamily='"Liberation Serif", serif'>a</text></Ic></Slot>
        <Combo $w={120} $h={27} $l={3} $r={6} $pl={10} $fs={14.500}><ComboText $dy={4}>浑厚</ComboText><ComboArrow $w={17}><Chevron /></ComboArrow></Combo>
        <Sep />
        <Gap $w={10} />
        <AlignBox><AlignIcon kind="l" /></AlignBox>
        <Gap $w={3} />
        <AlignBox $on><AlignIcon kind="c" /></AlignBox>
        <Gap $w={2} />
        <AlignBox><AlignIcon kind="r" /></AlignBox>
        <Gap $w={8} />
        <Sep />
        <TextColor />
        <Sep />
        <Slot $w={50} $t={9}><Ic c="#8f8f8f" w={1.500}><path d="M-5-6L-4-9C0-7 3-8 5-10L5-7M1-8V3M-4 4C-1 5 0 3 3 3" /><path d="M-9 10C-4 5 4 5 9 10" /></Ic></Slot>
        <Sep />
        <Slot $w={50} $t={9}><Ic><path {...F} d="M-11-10H-2L0-7H10V10H-11ZM1-10H10V-8.500H2Z" /><path stroke="#444" strokeWidth="1.300" d="M-8-2.500H-6M-4-2.500H8M-8 1H-6M-4 1H8M-8 4.500H-6M-4 4.500H8" /></Ic></Slot>
        <Sep />
        <Gap $w={695} />
        <Slot $w={24} $t={9}><Ic w={2}><circle cx="1" cy="-2.500" r="7" /><path d="M-3 3L-9 9" strokeWidth="2.500" /></Ic></Slot>
        <Slot $w={48} $t={9}><Ic c="#9a9a9a"><rect x="-10" y="-7.500" width="20" height="16" fill="#444" strokeWidth="1.600" /><path d="M-10-6H10" /><rect x="-7.500" y="-3" width="3.500" height="8.500" strokeWidth="1.200" /></Ic></Slot>
        <Slot $w={9} $t={18}><Chevron c="#6a6a6a" /></Slot>
        <Slot $w={46} $t={8}><Ic w={1.600}><path d="M-3-3H-9V10H9V-3H3M0 5V-9M-4-6L0-10 4-6" /></Ic></Slot>
      </OptionsBar>

      <Work>
        <ToolColumn>
          <CollapseBar><DoubleChevron /></CollapseBar>
          <HGrip $l={12} />
          <ToolList>
            {tools.map((t, i) => (
              <Tool key={i} $on={i === 15}>
                <Ic>{t}</Ic>
                {i !== 19 && <Corner />}
              </Tool>
            ))}
          </ToolList>
          <MiniRow>
            <Ic s={14}><rect x="-3" y="-2" width="8" height="8" fill={LIGHT} stroke="none" /><rect x="-6" y="-6" width="7" height="7" fill="#111" strokeWidth="1" /></Ic>
            <Ic s={14}><path d="M-4-3H3V4" /><path {...F} d="M-7-3L-3-6V0ZM3 7L0 3H6Z" /></Ic>
          </MiniRow>
          <ToolSwatches><SwatchPair><BgSwatch /><FgSwatch /></SwatchPair></ToolSwatches>
          <ToolFoot>
            <Tool><Ic><rect x="-10" y="-7.500" width="20" height="15.500" fill="#444" /><circle r="5.500" strokeDasharray="1.500 1.400" /></Ic></Tool>
            <Tool><Ic><rect x="-10" y="-5" width="13" height="12.500" /><rect x="-3.500" y="-8" width="13.500" height="10" fill="#535353" /></Ic><Corner /></Tool>
          </ToolFoot>
        </ToolColumn>

        <Doc>
          <TabStrip>
            <DocTab>
              <DocTitle>未标题-1 @ 100%(RGB/8)</DocTitle>
              <Ic s={10} c="#b8b8b8" w={2}><path d="M-3.500-4L3.500 3M3.500-4L-3.500 3" /></Ic>
            </DocTab>
          </TabStrip>
          <RulerRow>
            <RulerCorner />
            <HRuler>{horizontal.map((n, i) => <HCell key={i}>{n}</HCell>)}</HRuler>
          </RulerRow>
          <CanvasRow>
            <VRuler>
              {vertical.map((n, i) => (
                <VCell key={i}>{String(n).split("").map((d, k) => <span key={k}>{d}</span>)}</VCell>
              ))}
            </VRuler>
            <Pasteboard><Artboard /></Pasteboard>
          </CanvasRow>
          <StatusBar>
            <Zoom>100%</Zoom>
            <DocInfo>文档:1.83M/0 字节<Ic s={10} c="#c0c0c0"><path d="M-2-5L2 0.500-2 6" /></Ic></DocInfo>
          </StatusBar>
        </Doc>

        <Dock>
          <CollapseBar $end><DoubleChevron left /></CollapseBar>
          <DockGroup $h={51}>
            <HGrip $l={12} />
            <DockItem $mt={3}><Ic><path {...F} d="M-7.500-9L10 0-7.500 9Z" /></Ic></DockItem>
          </DockGroup>
          <DockGroup $h={87}>
            <HGrip $l={12} />
            <DockItem $mt={4}><Ic><path {...F} fill="#999" d="M-4-10L2-7V-.5L-4 2-10-.5V-7Z" /><path strokeWidth="1" d="M-4-10L2-7V-.5L-4 2-10-.5V-7ZM-10-7L-4-4 2-7M-4-4V2" /><path {...F} d="M4-10H9V-5H4ZM4-3.500H9V1H4ZM-10 5H9V10H-10Z" /></Ic></DockItem>
            <DockItem><Ic><circle r="9.800" strokeWidth="1.600" /><text {...F} y="5.500" textAnchor="middle" fontSize="17" fontFamily='"Liberation Serif", serif'>i</text></Ic></DockItem>
          </DockGroup>
          <DockGroup $h={86}>
            <HGrip $l={12} />
            <DockItem $mt={3}><Ic><path {...F} d="M-13-10H-10V-7H-13ZM-9-9.500H-3V-8H-9ZM-13-6H-10V-3H-13ZM-9-5.500H-3V-4H-9ZM-13-2H-10V1H-13ZM-9-1.500H-4V0H-9Z" /><g transform="translate(2 1.500) scale(1.120 .95)"><Brush /></g></Ic></DockItem>
            <DockItem><Ic><path strokeWidth="3" d="M0-6H12M-11 5H2" /><path {...F} d="M-13-7C-9-6-9-10-5-9.500-2-9-2-3-5-3-10-3-10-6-13-7ZM2 5C5-1 9-1 11-2V12C9 10 5 10 2 5Z" /></Ic></DockItem>
          </DockGroup>
          <DockGroup $h={86}>
            <HGrip $l={12} />
            <DockItem $mt={3}><Ic><text {...F} x="-2" y="8" textAnchor="middle" fontSize="24" fontFamily='"Open Sans", sans-serif'>A</text><path d="M8.500-10V10" strokeWidth="1.300" /></Ic></DockItem>
            <DockItem><Ic><path {...F} d="M0-9.500H7V-8H6V9.500H4.500V-8H2V9.500H0V0C-9 0-9-9.500 0-9.500Z" /></Ic></DockItem>
          </DockGroup>
          <DockGroup $h={86}>
            <HGrip $l={12} />
            <DockItem $mt={2}><Ic><path {...F} d="M-9-9.500H8.500V9.500H-9Z" /><path stroke="#444" d="M-6.500-5H-1M-6.500-2H-1M-6.500 1H-1" /><path stroke="#444" d="M1-5H6V1H1ZM-6.500 5H6" strokeWidth="2" /></Ic></DockItem>
            <DockItem><Ic><path {...F} d="M-9-9.500H8.500V3L2 9.500H-9Z" /><path stroke="#444" d="M-6-4.500H5M-6-1H5M-6 2.500H3M1.500 9.500V3.500H8" /></Ic></DockItem>
          </DockGroup>
          <DockGroup $h={52}>
            <HGrip $l={12} />
            <DockItem $mt={4}><Ic><rect x="-8.500" y="-9.500" width="4.500" height="4.500" /><rect x="-8.500" y="-2.500" width="4.500" height="4.500" /><path {...F} d="M-9.300 4.500H-3.200V10.500H-9.300ZM0-8.500H7L5-6C12 0 9 6 2 9 8 4 7-1 3.500-4L1.500-2Z" /></Ic></DockItem>
          </DockGroup>
        </Dock>

        <Panels>
          <CollapseBar $end $pad={6}><DoubleChevron /></CollapseBar>
          <Panel $h={251}>
            <PanelHead tabs={[["颜色", 55, true], ["色板", 54]]} />
            <ColorTop>
              <SwatchBox><SwatchPair><BgSwatch /><FgRing /></SwatchPair></SwatchBox>
              <Sliders>
                {([["H", "linear-gradient(to right,#f00,#ff0,#0f0,#0ff,#00f,#f0f,#f00)", "°"], ["S", "#000", "%"], ["B", "linear-gradient(to right,#000,#fff)", "%"]] as const).map(([l, bg, u]) => (
                  <SliderRow key={l}>
                    <SliderLabel>{l}</SliderLabel>
                    <Track $bg={bg}><SliderKnob /></Track>
                    <NumBox>0</NumBox>
                    <Unit $big={u === "°"}>{u}</Unit>
                  </SliderRow>
                ))}
              </Sliders>
            </ColorTop>
            <SpectrumRow><Spectrum /><Mono /></SpectrumRow>
          </Panel>

          <Panel $h={178}>
            <PanelHead tabs={[["学习", 54], ["库", 50], ["调整", 55, true]]} />
            <AdjTitle>添加调整</AdjTitle>
            <AdjRow $l={60}>{adj1.map((a, i) => <Ic key={i}>{a}</Ic>)}</AdjRow>
            <AdjRow $l={45}>{adj2.map((a, i) => <Ic key={i}>{a}</Ic>)}</AdjRow>
            <AdjRow $l={60}>{adj3.map((a, i) => <Ic key={i}>{a}</Ic>)}</AdjRow>
          </Panel>

          <PanelHead tabs={[["通道", 56], ["路径", 57], ["图层", 55, true]]} />
          <LayerTools $h={39} $line $pt={8}>
            <Combo $dim $w={108} $h={27} $pl={9} $fs={14.300}>
              <ComboText $dy={3}><Ic s={14} c={DIM} w={1.500}><circle cx="1.500" cy="0" r="4.200" /><path d="M-1.500 3L-6 8" strokeWidth="2" /></Ic>类型</ComboText>
              <ComboArrow $w={18}><Chevron c="#6c6c6c" /></ComboArrow>
            </Combo>
            <FilterIcons>
              <Ic c={DIM}><rect x="-7" y="-5.500" width="14" height="11" /><path {...F} d="M-5 3.500V1L-2.500-2.500 0 1 2.500-2.500 5 1V3.500Z" /></Ic>
              <Ic c={DIM}><circle r="6" /><path {...F} d="M-4.300 4.300A6 6 0 014.300-4.300Z" /></Ic>
              <Ic c={DIM}><TType size={17} y={6} /></Ic>
              <Ic c={DIM}><rect x="-5" y="-5" width="10" height="10" /><path fill="#535353" strokeWidth="1.200" d="M-7-7H-3.500V-3.500H-7ZM3.500-7H7V-3.500H3.500ZM-7 3.500H-3.500V7H-7ZM3.500 3.500H7V7H3.500Z" /></Ic>
              <Ic c={DIM}><path d="M-2-1V-6.500H3L6-3.500V5H2M2-6V-3H6" /><path {...F} d="M-7-.5H1V7H-7Z" /></Ic>
            </FilterIcons>
            <Toggle />
          </LayerTools>
          <LayerTools $h={35} $line $pt={4}>
            <Combo $dim $w={146} $h={27} $pl={9} $fs={14.500}><ComboText $dy={3}>正常</ComboText><ComboArrow $w={17}><Chevron c="#6c6c6c" /></ComboArrow></Combo>
            <FieldLabel $l={11} $w={70}>不透明度:</FieldLabel>
            <Combo $dim $w={70} $h={24}><ComboText $faint $dy={2}>100%</ComboText><ComboArrow $line $w={19}><Chevron c="#6c6c6c" /></ComboArrow></Combo>
          </LayerTools>
          <LayerTools $h={39} $pb={1}>
            <FieldLabel $l={3} $w={44}>锁定:</FieldLabel>
            <Ic c={DIM}><rect x="-6.500" y="-6.500" width="13" height="13" fill="#444" /><path {...F} d="M-6-6H-2V-2H-6ZM2-6H6V-2H2ZM-2-2H2V2H-2ZM-6 2H-2V6H-6ZM2 2H6V6H2Z" /></Ic>
            <Gap $w={4} />
            <Ic c={DIM}><Scale k={0.850}><Brush /></Scale></Ic>
            <Gap $w={2} />
            <Ic c={DIM}><Scale k={0.770}><MoveIcon /></Scale></Ic>
            <Gap $w={3} />
            <Ic c={DIM}><path d="M-8-4H2L6 0M-5-7V5H8M5-1V7M6-6L8-7" /></Ic>
            <Gap $w={5} />
            <Ic c={DIM}><LockIcon /></Ic>
            <FieldLabel $l={6} $w={41}>填充:</FieldLabel>
            <Combo $dim $w={70} $h={24}><ComboText $faint $dy={2}>100%</ComboText><ComboArrow $line $w={19}><Chevron c="#6c6c6c" /></ComboArrow></Combo>
          </LayerTools>
          <LayerRow>
            <EyeCell><Ic s={16}><path d="M-7 0C-4-5.500 4-5.500 7 0 4 5.500-4 5.500-7 0Z" /><circle {...F} r="3.300" /><circle r="1" fill="#444" stroke="none" cx="1" cy="-1" /></Ic></EyeCell>
            <LayerBody><Thumb /><LayerName>背景</LayerName><Ic s={14} c="#e8e8e8" w={1.600}><LockIcon open /></Ic></LayerBody>
            <ScrollCell />
          </LayerRow>
          <LayerEmpty />
          <LayerFoot>
            <Ic c="#777"><path d="M-2-3H-5A3 3 0 00-5 3H-2M2-3H5A3 3 0 015 3H2M-4 0H4" /></Ic>
            <Ic c="#777"><text {...F} x="-7" y="5" fontSize="15" fontStyle="italic" fontFamily='"Liberation Serif", serif'>fx</text></Ic>
            <Ic><path {...F} d="M-8-6H8V6H-8Z" /><circle r="3.300" fill="#535353" stroke="none" /></Ic>
            <Ic><circle r="6" /><path {...F} d="M-4.300 4.300A6 6 0 014.300-4.300ZM7 8H12L9.500 11Z" /></Ic>
            <Ic><path {...F} d="M-8-6H-2L0-4H8V6H-8Z" /></Ic>
            <Ic><path d="M-5.500-5.500H6V6H0L-5.500 1ZM-5.500 1H0V6" /></Ic>
            <Ic c="#8c8c8c"><path d="M-6.500-4H6.500M-2-4V-6H2V-4M-5-4V6.500H5V-4M-2-2V5M0-2V5M2-2V5" /></Ic>
          </LayerFoot>
        </Panels>
      </Work>

      <TaskBar>
        <TaskCell $w={44}><Ic c="#fff"><path {...F} d="M-10-7.500L-1.500-8.800V-.7H-10ZM-.5-9L10-10.300V-.7H-.5ZM-10 .5H-1.500V8.800L-10 7.500ZM-.5.5H10V10.300L-.5 9Z" /></Ic></TaskCell>
        <TaskCell $w={46}><Ic c="#eee"><circle cx="3" cy="-3" r="6.800" /><path d="M-2 2L-10 10" /></Ic></TaskCell>
        <TaskCell $w={44}><Ic c="#fff"><circle r="8.500" strokeWidth="2.400" /></Ic></TaskCell>
        <TaskCell $w={49}><Ic c="#eee"><path d="M-12-9V-6H0V-9M-12 9V6H0V9M-12-3H0V3H-12ZM7-10V-4M7 1V9" strokeWidth="1.300" /><path {...F} d="M5.500-4H8.500V0H5.500Z" /></Ic></TaskCell>
        <TaskCell $w={46} $open>
          <svg width="20" height="20" viewBox="-10 -10 20 20">
            {["#c94bf0", "#f04a5a", "#ff9a2e", "#ffd92e", "#3fd45a", "#3a8cf0"].map((c, i) => (
              <path key={c} fill={c} transform={`rotate(${i * 60 - 20})`} d="M0 0C-6-2-5-9.500 0-10 5-10 8.500-6 8.500-4 5-6 1-4 0 0Z" />
            ))}
            <circle r="2" fill="#fff" />
          </svg>
        </TaskCell>
        <TaskCell $w={46}><AppBadge $c="#c58df0" $bg="#25063f">Ae</AppBadge></TaskCell>
        <TaskCell $w={46} $on><AppBadge $c="#16b5e4" $bg="#061e2c">Ps</AppBadge></TaskCell>
        <TaskCell $w={46}><AppBadge $c="#f07a0c" $bg="#2c1500">Ai</AppBadge></TaskCell>
        <TaskCell $w={46} $open><Ic><path fill="#e8a317" stroke="none" d="M-9-8H-2L0-5H-9Z" /><path fill="#ffd667" stroke="none" d="M-9-6H9V7H-9Z" /><path fill="#3a96dd" stroke="none" d="M-6 8V0H6V8H3V4H-3V8Z" /></Ic></TaskCell>
        <TaskCell $w={46} $open><Ic><rect x="-10" y="-9.500" width="20" height="19" rx="4" fill="#f5474f" stroke="none" /><path {...F} fill="#fff" d="M0-4C3-8 9-5 8 0 6 4 3 5 0 7-3 5-6 4-8 0-9-5-3-8 0-4Z" /><path stroke="#f5474f" strokeWidth="1" d="M-5-4L-2 0-4 3M5-4L2 0 4 3M-7 0H-3M7 0H3M0-2V3" /></Ic></TaskCell>
        <TaskCell $w={46} $open><Ic><rect x="-10" y="-9.500" width="19" height="19" rx="4" fill="#f5474f" stroke="none" /><path fill="#ffc2c4" stroke="none" d="M-1-4C2-8 8-5 7 0 5 4 2 5-1 7-4 5-7 4-9 0-9-5-3-8-1-4Z" /><path stroke="#f5474f" strokeWidth="1" d="M-5-4L-2 0-4 3M5-4L2 0 4 3M-7 0H-3" /><path fill="#8a6cf0" stroke="none" d="M-1 10V4A5 5 0 014-1H9V6Q9 10 5 10Z" /><path {...F} fill="#fff" d="M2 7V4L4.500 2 7 4V7H5.500V5H3.500V7Z" /></Ic></TaskCell>
        <Tray>
          <TrayCell $w={22}><Ic s={20} c="#f0f0f0"><path d="M-8 4L0-4 8 4" strokeWidth="1.300" /></Ic></TrayCell>
          <TrayCell $w={38}><Ic s={20}><path fill="#fff" stroke="none" d="M-9-7C-5-7-3-9 0-10 3-9 5-7 9-7 9 1 7 6 0 9-7 6-9 1-9-7Z" /><path stroke="#1b2b2f" d="M0-10V9M-9-1H9" /><circle cx="5.500" cy="5" r="5.300" fill="#15924a" stroke="none" /><path stroke="#fff" d="M3 5L5 7 8 3.500" /></Ic></TrayCell>
          <TrayCell $w={22}><Ic s={20} c="#fff"><path {...F} d="M-5-3H7V4H-5Z" /><path d="M-8 0V4C-8 6-7 6-6 6H8.500V-4.500H-3M8.500-1H10V2H8.500" strokeWidth="1.200" /><path d="M-10-4H-6V-1H-10ZM-9-6V-4M-7-6V-4" strokeWidth="1" /></Ic></TrayCell>
          <TrayCell $w={38}><Ic s={20} c="#f0f0f0" w={1.200}><path d="M-4-6H10V5H-7V0M1 5V8M-4 8H6" /><path d="M-10-8H-5V-3H-10ZM-7.500-3V5" /></Ic></TrayCell>
          <TrayCell $w={23}><Ic s={20} c="#f0f0f0" w={1.200}><path d="M-10-3H-7L-2-7V7L-7 3H-10ZM1-3C2.500-1 2.500 1 1 3M4-6C7-2 7 2 4 6M7-8C11-3 11 3 7 8" /></Ic></TrayCell>
          <TrayCell $w={47}><Ic s={20} c="#f0f0f0" w={1.300}><path d="M-3 2C-8-1-11 3-9 6-7 9-3 8-2 5L4-7C6-11 10-8 8-5L2 5C0 8-3 7-2 4L3-5M2 3C3-2 11-2 9 1 8 3 5 3 3 3" /></Ic></TrayCell>
          <TrayCell $w={38}><SLogo size={22} /></TrayCell>
          <Clock>23:13</Clock>
          <TrayCell $w={49}><Ic s={20} c="#f5f5f5" w={1.300}><path d="M-9.500-9H9.500V6.500H4L0 9.500V6.500H-9.500Z" /></Ic></TrayCell>
          <ShowDesktop />
        </Tray>
      </TaskBar>

      <Flyout>
        <FlyRow $on $h={24}><Bullet $on /><Ic><TType x={1} y={8} /></Ic><FlyText>横排文字工具</FlyText>T</FlyRow>
        <FlyRow $h={24}><Bullet /><Ic><TType x={2} y={9} size={23} /><path d="M-10-8V6M-12.500 5L-10 9-7.500 5" /></Ic><FlyText>直排文字工具</FlyText>T</FlyRow>
        <FlyRow $h={23}><Bullet /><Ic w={1.500}><TType x={2} y={8} size={21} dashed /><path d="M-10-8V6M-12.500 5L-10 9-7.500 5" /></Ic><FlyText>直排文字蒙版工具</FlyText>T</FlyRow>
        <FlyRow $h={23}><Bullet /><Ic><TType x={2} y={8} size={21} dashed /></Ic><FlyText>横排文字蒙版工具</FlyText>T</FlyRow>
      </Flyout>
      <RedFrame />
      <Over $x={270} $y={610} width="360" height="135" viewBox="270 610 360 135">
        <path fill="#ff2112" d="M274 623.500L291.500 620 289.500 624.500 404 662 620 735.500 619 736.500 404 669.500 288 633 286 637.500Z" />
      </Over>

      <Ime>
        <ImeLogo><SLogo size={35} /></ImeLogo>
        <ImeBar>
          <ImeCell $w={22}>五</ImeCell>
          <ImeCell $w={34}><Ic s={18} c="#3f4560"><path {...F} d="M2-8A9 9 0 11-8.500 4C-1 6 5 0 2-8Z" /></Ic></ImeCell>
          <ImeCell $w={20}><Ic s={18} c="#3f4560"><circle cx="-5" cy="-3.500" r="2.200" /><path {...F} d="M3 1A2.500 2.500 0 118 1C8 5 6 7 3 8L2.500 7C4.500 6 5.500 5 5 3.500Z" /></Ic></ImeCell>
          <ImeCell $w={35}><Ic s={20} c="#3f4560"><rect x="-9.500" y="-6.500" width="19" height="13" rx="1" strokeWidth="1.800" /><path strokeDasharray="2 1.500" strokeWidth="1.800" d="M-7-3H8M-6 0H8" /><path strokeWidth="1.800" d="M-4 3.500H4" /></Ic></ImeCell>
          <ImeCell $w={22}><Ic s={18} c="#b9cfcb"><circle {...F} cy="-5" r="3.800" /><path {...F} d="M-4 0H4L7.500 4 5 6V8.500H-5V6L-7.500 4Z" /></Ic></ImeCell>
          <ImeCell $w={33}><Ic s={20} c="#3f4560"><path d="M-7 7L2-2" strokeWidth="4.500" /><path {...F} d="M8.500-4.500A5.500 5.500 0 11 2.500-8.500L2.500-5 5-2.500Z" /></Ic></ImeCell>
        </ImeBar>
      </Ime>

      <Over $x={1470} $y={870} width="350" height="180" viewBox="1470 870 350 180">
        <g fill="#fff" fillOpacity=".72">
          <text x="1472" y="982" fontSize="79" fontWeight="700" fontFamily='"Liberation Sans", sans-serif' textLength="120" lengthAdjust="spacingAndGlyphs">Bai</text>
          <ellipse cx="1605" cy="918" rx="12.500" ry="16.500" />
          <ellipse cx="1629.500" cy="893.500" rx="12.500" ry="16.500" />
          <ellipse cx="1660" cy="895.500" rx="12.500" ry="16.500" transform="rotate(12 1660 895.500)" />
          <ellipse cx="1679" cy="925" rx="12.500" ry="16" />
          <path d="M1641 920.500C1656 920.500 1662 937 1673 947 1683 955 1687 969 1682 977 1677 986 1667 985 1658 983 1648 981 1634 981 1624 983 1614 985 1604 984 1600 973 1597 961 1602 953 1611 946 1622 936 1626 920.500 1641 920.500Z" />
          <text x="1696" y="977" fontSize="57" fontWeight="900" fontFamily='"Noto Sans CJK SC", sans-serif' textLength="116" lengthAdjust="spacingAndGlyphs">经验</text>
          <text x="1475" y="1028" fontSize="39" fontWeight="500" fontFamily='"Noto Sans", "Open Sans", sans-serif' textLength="341" lengthAdjust="spacingAndGlyphs" fillOpacity=".82" stroke="#fff" strokeOpacity=".5" strokeWidth=".5">jingyan.baidu.com</text>
        </g>
        <text x="1609" y="975" fontSize="50" fontWeight="700" fill="#505050" fontFamily='"Liberation Sans", sans-serif' textLength="61" lengthAdjust="spacingAndGlyphs">du</text>
      </Over>
    </Screen>
  );
}
